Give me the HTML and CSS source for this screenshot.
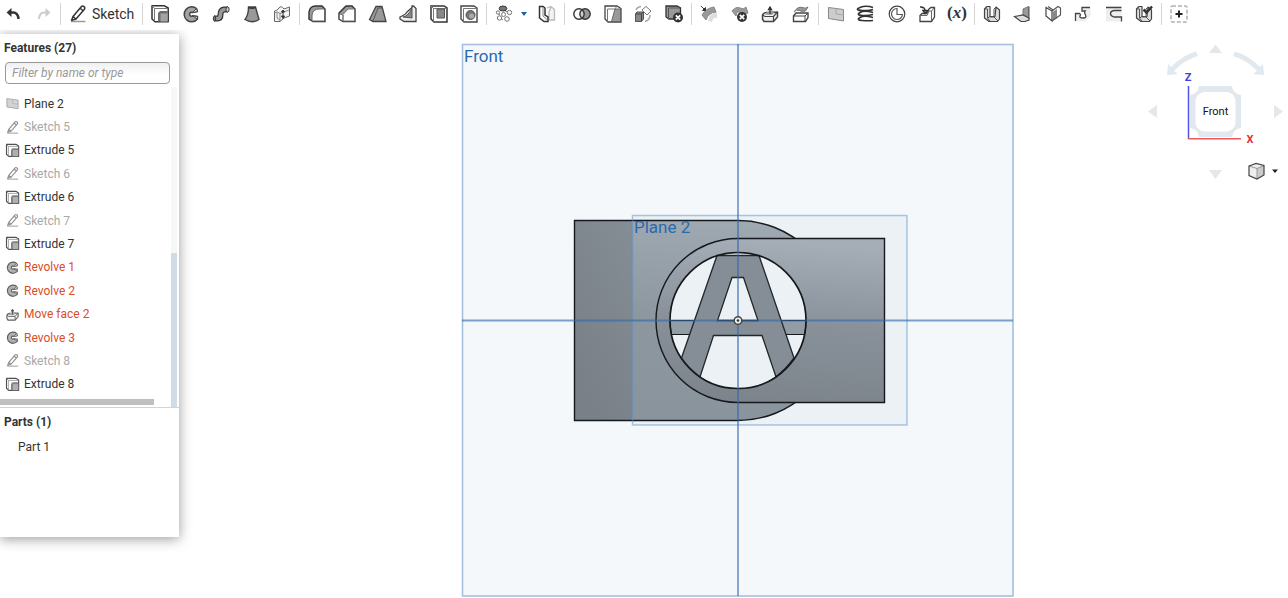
FILE: index.html
```html
<!DOCTYPE html>
<html lang="en">
<head>
<meta charset="utf-8">
<title>Part Studio</title>
<link rel="stylesheet" href="styles.css">
</head>
<body>
<svg class="symbols" aria-hidden="true">
  <symbol id="i-sketch" viewBox="0 0 20 20"><path d="M5 12.500 13.500 2.500Q14.500 1.500 16 2.700T16.200 5.500L8 15 3.500 16.500ZM5 12.500 8 15M12.200 4.200 15 6.700" fill="none" stroke="currentColor" stroke-width="1.500" stroke-linejoin="round"/><path d="M3 17.500H17.500" stroke="#999" stroke-width="1.500"/></symbol>
  <symbol id="i-extrude" viewBox="0 0 20 20"><path d="M2 1.800H14.500L18.200 4V17.800H5L2 15Z" fill="#fff" stroke="#333" stroke-width="1.500" stroke-linejoin="round"/><path d="M4.500 17V4.500H17.500M4.500 4.500 2 2" fill="none" stroke="#777"/><path d="M8 17.500V9L10 7H17.500V17.500Z" fill="#6d6d6d"/><rect x="10.500" y="9.500" width="7" height="8" fill="#a3a3a3"/></symbol>
  <symbol id="i-revolve" viewBox="0 0 20 20"><path d="M15.500 4.500A7.500 7.500 0 1 0 16.500 15L16.500 12.500 11.500 11.800A1.900 1.900 0 1 1 11.500 8.600L16.500 7.500Z" fill="#a3a3a3" stroke="#444" stroke-width="1.500" stroke-linejoin="round"/><path d="M11.500 11.800 16.500 12.500V15ZM11.500 8.600 16.500 7.500 15.500 4.500Z" fill="#eee" stroke="#444"/></symbol>
  <symbol id="i-plane" viewBox="0 0 20 20"><path d="M2.500 3.500 17.500 5.500V17L2.500 14.500Z" fill="#ccc" stroke="#888"/><path d="M10 4.500V10L17.500 11" fill="none" stroke="#aaa"/></symbol>
  <symbol id="i-move" viewBox="0 0 20 20"><path d="M2.500 11Q4 8 7 8.500T17.500 8V13L13.500 17.500H4L2.500 15Z" fill="#f2f2f2" stroke="#444" stroke-width="1.500" stroke-linejoin="round"/><path d="M2.500 11 5 12.500H13.500V17M13.500 12.500 17 8.500" fill="none" stroke="#444" stroke-width="1.200"/><path d="M5 10.500Q7 6 15 7L12 11Z" fill="#999"/><path d="M10 10V4M8.500 5.500 10 3 11.500 5.500Z" fill="#333" stroke="#333" stroke-width="1.300"/></symbol>
  <symbol id="i-sheet" viewBox="0 0 20 20"><path d="M2.500 5 5 2.500H8V12.500H13L14 3 17.500 6V15L15.500 17.500H7L2.500 14Z" fill="#ddd" stroke="#444" stroke-width="1.200" stroke-linejoin="round"/><path d="M2.500 5 5.500 5V14L8 12.500M5.500 14 8 17M12 5 14 3M12 5V13L16 17M12 13H8" fill="none" stroke="#555"/></symbol>
  <linearGradient id="front-face" x1="0.350" y1="0" x2="0.250" y2="1"><stop offset="0" stop-color="#a5adb7"/><stop offset=".5" stop-color="#88919a"/><stop offset="1" stop-color="#7c838b"/></linearGradient>
  <linearGradient id="back-face" x1="0.600" y1="0" x2="0.500" y2="1"><stop offset="0" stop-color="#9ea9b1"/><stop offset=".5" stop-color="#8c979f"/><stop offset="1" stop-color="#8a949d"/></linearGradient>
  <linearGradient id="side-face" x1="1" y1="0" x2="0.400" y2="1"><stop offset="0" stop-color="#858d95"/><stop offset="1" stop-color="#798087"/></linearGradient>
</svg>

<header class="toolbar">
  <div class="group">
    <button class="tool" aria-label="Undo"><svg viewBox="0 0 20 20"><path d="M6.500 4V13L1.500 8.500Z" fill="#333"/><path d="M5 8.500H8Q13 8.500 13.500 15" fill="none" stroke="#333" stroke-width="2.500"/></svg></button>
    <button class="tool" aria-label="Redo"><svg viewBox="0 0 20 20"><path d="M11.500 4V13L16.500 8.500Z" fill="#ccc"/><path d="M13 8.500H10Q5.500 8.500 5 15" fill="none" stroke="#ccc" stroke-width="2"/></svg></button>
  </div>
  <div class="group"><button class="tool sketch"><svg><use href="#i-sketch"/></svg>Sketch</button></div>
  <div class="group">
    <button class="tool" aria-label="Extrude"><svg><use href="#i-extrude"/></svg></button>
    <button class="tool" aria-label="Revolve"><svg><use href="#i-revolve"/></svg></button>
    <button class="tool" aria-label="Sweep"><svg viewBox="0 0 20 20"><path d="M3 14.500H6.500Q9.500 14.500 9.500 10.500 9.500 6 13 5.500H17" fill="none" stroke="#333" stroke-width="6"/><path d="M3.500 14.500H6.500Q9.500 14.500 9.500 10.500 9.500 6 13 5.500H16" fill="none" stroke="#999" stroke-width="3.500"/><ellipse cx="16.500" cy="5.500" rx="1.600" ry="2.600" fill="#ccc" stroke="#333"/><ellipse cx="3.500" cy="14.500" rx="1.200" ry="2.500" fill="#777" stroke="#333"/></svg></button>
    <button class="tool" aria-label="Loft"><svg viewBox="0 0 20 20"><path d="M6.500 3H13.500L17 15.500Q10 20 3 15.500Q6.500 11 6.500 3Z" fill="#999" stroke="#444" stroke-width="1.400"/><path d="M6.500 3.500Q10 5 13.500 3.500" fill="none" stroke="#333" stroke-width="1.500"/></svg></button>
    <button class="tool" aria-label="Thicken"><svg viewBox="0 0 20 20"><path d="M2.500 7Q5 7 7 4T12 5L17.500 3V12L12 14 8 17.500H2.500Z" fill="#f3f3f3" stroke="#666"/><path d="M2.500 9 5.500 8 8 9.500 17 6M8 9V17M5 8V14L8 16" fill="none" stroke="#888"/><path d="M11 8V12M9.500 8 11 6 12.500 8ZM9.500 12 11 14.500 12.500 12Z" fill="#333" stroke="#333"/></svg></button>
  </div>
  <div class="group">
    <button class="tool" aria-label="Fillet"><svg viewBox="0 0 20 20"><path d="M2 8Q3 2 8.500 2H15L18 5V17.500H6L2 15Z" fill="#999" stroke="#333" stroke-width="1.400"/><path d="M5 17V11Q6 5 12 5H17.500V17Z" fill="#fff" stroke="#666"/></svg></button>
    <button class="tool" aria-label="Chamfer"><svg viewBox="0 0 20 20"><path d="M2 9 9 2H15L18 5V17.500H6L2 15Z" fill="#999" stroke="#333" stroke-width="1.400"/><path d="M6 17V10.500L11 5H17.500V17ZM2.500 10 6 11V17L2.500 15Z" fill="#fff" stroke="#777"/></svg></button>
    <button class="tool" aria-label="Draft"><svg viewBox="0 0 20 20"><path d="M1.500 15.500 8 2.500H14L18 17.500H5Z" fill="#999" stroke="#444" stroke-width="1.300"/><path d="M5 17 10 4H14" fill="none" stroke="#555"/></svg></button>
    <button class="tool" aria-label="Rib"><svg viewBox="0 0 20 20"><path d="M2 13 5 11.500Q8 10 9 8L14 3.500V2H15.500L18 4.500V17.500H6L2 15Z" fill="#eee" stroke="#444" stroke-width="1.300"/><path d="M5 13Q10 12 14 4.500V14Z" fill="#888" stroke="#555"/></svg></button>
    <button class="tool" aria-label="Shell"><svg viewBox="0 0 20 20"><path d="M2 2H15L18 4V18H5L2 15Z" fill="#fff" stroke="#333" stroke-width="1.500"/><path d="M4.500 17.500V4.500H18M2 2 4.500 4.500" fill="none" stroke="#777"/><path d="M8 5H15.500V14H8Z" fill="#888" stroke="#555"/></svg></button>
    <button class="tool" aria-label="Hole"><svg viewBox="0 0 20 20"><path d="M2 2H15L18 4V18H5L2 15Z" fill="#fff" stroke="#444" stroke-width="1.400"/><path d="M4.500 17.500V4.500H18" fill="none" stroke="#777"/><circle cx="11.500" cy="11" r="4.500" fill="#777" stroke="#555"/><circle cx="12.500" cy="12" r="2.500" fill="#aaa"/></svg></button>
  </div>
  <div class="group">
    <button class="tool" aria-label="Linear pattern"><svg viewBox="0 0 20 20"><g fill="#fff" stroke="#777"><path d="M2 8 6 11M10 6 16 10M5 13 9 16"/><circle cx="4" cy="8.500" r="1.700"/><circle cx="9.500" cy="10.500" r="2"/><circle cx="15.500" cy="8.500" r="2.200"/><circle cx="5.500" cy="14" r="2.200"/><circle cx="13" cy="15" r="2.300"/></g><ellipse cx="9" cy="4.500" rx="3.800" ry="2.500" fill="#777" stroke="#333"/></svg></button>
    <button class="caret" aria-label="Pattern options"><svg viewBox="0 0 6 4"><path d="M0 0H6L3 4Z" fill="#1b5faa"/></svg></button>
    <button class="tool" aria-label="Mirror"><svg viewBox="0 0 20 20"><path d="M10 4 14 2.500 17.500 5.500V16H12V8L14 3" fill="#f3f3f3" stroke="#bbb" stroke-width="1.300"/><path d="M2.500 2.500H6L8 4V11L11 13V17.500H7L2.500 14Z" fill="#fff" stroke="#333" stroke-width="1.500"/><path d="M6 3V12L10.500 16" fill="none" stroke="#888"/></svg></button>
  </div>
  <div class="group">
    <button class="tool" aria-label="Boolean"><svg viewBox="0 0 20 20"><circle cx="13" cy="10" r="5.200" fill="#999"/><circle cx="7" cy="10" r="5.200" fill="#fff" fill-opacity=".5"/><g fill="none" stroke="#333" stroke-width="1.400"><circle cx="7" cy="10" r="5.200"/><circle cx="13" cy="10" r="5.200"/></g></svg></button>
    <button class="tool" aria-label="Split"><svg viewBox="0 0 20 20"><path d="M2 2H14L18 4.500V18H5L2 15Z" fill="#fff" stroke="#444" stroke-width="1.300"/><path d="M12 5H17.500V17.500H8.500Z" fill="#999" stroke="#666"/><path d="M4.500 17.500V5H12L14 2" fill="none" stroke="#777"/></svg></button>
    <button class="tool" aria-label="Transform"><svg viewBox="0 0 20 20"><path d="M2.500 9.500 4 8H10.500V15L8.500 17.500H2.500Z" fill="#888" stroke="#555"/><path d="M2.500 10H8.500V17.500M8.500 10 10.500 8" fill="none" stroke="#444"/><path d="M9 6 13 2.500 18 7 14 11Z" fill="#fff" stroke="#777"/><path d="M3 6Q4 3 8 2.500M12 17.500Q17 16 17 11" fill="none" stroke="#aaa" stroke-width="1.500"/></svg></button>
    <button class="tool" aria-label="Delete part"><svg viewBox="0 0 20 20"><path d="M2 2H13L16.500 4V15H5L2 13Z" fill="#999" stroke="#333" stroke-width="1.300"/><path d="M4.500 15V4H16" fill="none" stroke="#555"/><circle cx="14" cy="13.500" r="5" fill="#333"/><path d="M11.800 11.300 16.200 15.700M16.200 11.300 11.800 15.700" stroke="#fff" stroke-width="1.700"/></svg></button>
  </div>
  <div class="group">
    <button class="tool" aria-label="Modify fillet"><svg viewBox="0 0 20 20"><path d="M9 17Q10 9 18 8V14Q14 13 13 18Z" fill="#ddd"/><path d="M3 11Q7 4 15 3L17 8Q10 8 7 16Z" fill="#999" stroke="#888"/><path d="M2 2 5.500 5.500M6.500 3.500V6.500H3.500Z" fill="#333" stroke="#333"/></svg></button>
    <button class="tool" aria-label="Delete face"><svg viewBox="0 0 20 20"><path d="M2 7Q6 2 10 4T16 3L18 9Q13 12 10 9T6 12Z" fill="#999" stroke="#888"/><circle cx="12" cy="13" r="5" fill="#333"/><path d="M9.800 10.800 14.200 15.200M14.200 10.800 9.800 15.200" stroke="#fff" stroke-width="1.700"/></svg></button>
    <button class="tool" aria-label="Move face"><svg><use href="#i-move"/></svg></button>
    <button class="tool" aria-label="Replace face"><svg viewBox="0 0 20 20"><path d="M2.500 12 5 9H17V13.500L14.500 17.500H2.500Z" fill="#fff" stroke="#444" stroke-width="1.400"/><path d="M2.500 12H14V17.500M14 12 17 9" fill="none" stroke="#444"/><path d="M3 8Q7 2 11 3.500T17 3L14.500 7Q11 8 8 6.500T3 8Z" fill="#999" stroke="#777"/></svg></button>
  </div>
  <div class="group">
    <button class="tool" aria-label="Plane"><svg><use href="#i-plane"/></svg></button>
    <button class="tool" aria-label="Helix"><svg viewBox="0 0 20 20"><path d="M17 3.500Q10 1 4 3.500T6 6.500 17 5.500M17 8.500Q8 6 4 8.500T6 11.500 17 10.500M17 13.500Q8 11 4 13.500T6 16.500 17 16.500" fill="none" stroke="#333" stroke-width="1.700"/></svg></button>
    <button class="tool" aria-label="3D curve"><svg viewBox="0 0 20 20"><circle cx="10" cy="10" r="7.800" fill="#fff" stroke="#444" stroke-width="1.200"/><path d="M10 4.500V10.500H15.500A5.500 5.500 0 1 1 10 4.500Z" fill="none" stroke="#555" stroke-width="1.200"/></svg></button>
    <button class="tool" aria-label="Import"><svg viewBox="0 0 20 20"><path d="M3 11.500 5 9.500H10L12 5 14 3.500H17.500V13L14.500 17.500H3Z" fill="#fff" stroke="#444" stroke-width="1.300"/><path d="M3 11.500H10L12 7H14.500V17M14.500 7 17.500 3.500" fill="none" stroke="#666"/><path d="M3 3Q8 2.500 8 7M6 6.500H10.500L8 9.500Z" fill="#333" fill-opacity=".2" stroke="#333" stroke-width="1.500"/></svg></button>
    <button class="tool variable" aria-label="Variable">(<i>x</i>)</button>
  </div>
  <div class="group">
    <button class="tool" aria-label="Sheet metal model"><svg><use href="#i-sheet"/></svg></button>
    <button class="tool" aria-label="Flange"><svg viewBox="0 0 20 20"><path d="M11 5 16.500 2.500V14L11 11Z" fill="#999" stroke="#777"/><path d="M2.500 12.500 11 11 17 14V16L13 17.500H9Z" fill="#ddd" stroke="#444" stroke-width="1.200"/><path d="M17 2.500V15" stroke="#555"/></svg></button>
    <button class="tool" aria-label="Bend"><svg viewBox="0 0 20 20"><path d="M3 3.500 9 7V17L3 12Z" fill="#fff" stroke="#444" stroke-width="1.200"/><path d="M9 8.500 14 5V14L9 17Z" fill="#888"/><path d="M9 7 15 2.500 17.500 4V11L9 17M5 2.500 10 6" fill="none" stroke="#555" stroke-width="1.200"/></svg></button>
    <button class="tool" aria-label="Tab"><svg viewBox="0 0 20 20"><path d="M2 9H7V13H12V8H9V3H17.500V12L12 17.500H2Z" fill="#eee"/><path d="M2.500 17V9.500H6.500Q8 10 7 12T10 14 12.500 11 12 7H9V3.500H17" fill="none" stroke="#444" stroke-width="1.300"/></svg></button>
    <button class="tool" aria-label="Joint"><svg viewBox="0 0 20 20"><path d="M2 2.500H17.500V17.500H2Z" fill="#eee"/><path d="M2 3.500H17.500M17.500 6.500H10Q6.500 7 6.500 9.500T10 13H17.500V17.500" fill="none" stroke="#444" stroke-width="1.300"/></svg></button>
    <button class="tool" aria-label="Finish sheet metal model"><svg viewBox="0 0 20 20"><use href="#i-sheet"/><path d="M9.500 5.500 12.500 8.500 18 2.500" fill="none" stroke="#333" stroke-width="2.500"/></svg></button>
  </div>
  <div class="group last">
    <button class="tool" aria-label="Add custom features"><svg viewBox="0 0 20 20"><rect x="2" y="2" width="16" height="16" rx="1" fill="none" stroke="#888" stroke-dasharray="4 2"/><path d="M10 6.500V13.500M6.500 10H13.500" stroke="#222" stroke-width="2"/></svg></button>
  </div>
</header>

<main class="workspace">
  <aside class="panel">
    <h2>Features (27)</h2>
    <input class="filter" type="text" placeholder="Filter by name or type" aria-label="Filter by name or type">
    <div class="scroller">
      <ul class="features">
        <li><svg><use href="#i-plane"/></svg>Plane 2</li>
        <li class="muted"><svg><use href="#i-sketch"/></svg>Sketch 5</li>
        <li><svg><use href="#i-extrude"/></svg>Extrude 5</li>
        <li class="muted"><svg><use href="#i-sketch"/></svg>Sketch 6</li>
        <li><svg><use href="#i-extrude"/></svg>Extrude 6</li>
        <li class="muted"><svg><use href="#i-sketch"/></svg>Sketch 7</li>
        <li><svg><use href="#i-extrude"/></svg>Extrude 7</li>
        <li class="error"><svg><use href="#i-revolve"/></svg>Revolve 1</li>
        <li class="error"><svg><use href="#i-revolve"/></svg>Revolve 2</li>
        <li class="error"><svg><use href="#i-move"/></svg>Move face 2</li>
        <li class="error"><svg><use href="#i-revolve"/></svg>Revolve 3</li>
        <li class="muted"><svg><use href="#i-sketch"/></svg>Sketch 8</li>
        <li><svg><use href="#i-extrude"/></svg>Extrude 8</li>
      </ul>
      <div class="track"><div class="thumb"></div></div>
      <div class="hbar"></div>
    </div>
    <section class="parts">
      <h2>Parts (1)</h2>
      <p>Part 1</p>
    </section>
  </aside>

  <div class="canvas">
    <svg class="model" viewBox="461 43 554 555" role="img" aria-label="Front view of Part 1">
      <rect x="462.500" y="44.500" width="550.500" height="551.500" fill="#f4f8fb" stroke="#a5c0df" stroke-width="1.600"/>
      <rect x="632.500" y="215.500" width="274.500" height="209.500" fill="#ebf1f5"/>
      <path d="M574.500 220.500H738A100 100 0 0 1 738 420.500H574.500Z" fill="url(#back-face)"/>
      <rect x="574.500" y="220.500" width="58" height="200" fill="url(#side-face)"/>
      <path d="M574.500 220.500H738A100 100 0 0 1 738 420.500H574.500Z" fill="none" stroke="#15191d" stroke-width="1.400"/>
      <path d="M738 238.500H884.500V402.500H738A82 82 0 0 1 738 238.500Z" fill="url(#front-face)" stroke="#15191d" stroke-width="1.400"/>
      <circle cx="738" cy="320.500" r="68" fill="#ebf1f5"/>
      <path d="M670 320.500H806Q806 328 804.500 334.500H671.500Q670 328 670 320.500Z" fill="#929ca5" stroke="#15191d"/>
      <path d="M717 255.500H759L794 358Q786 369 776 377L762 335.500H713.500L700 377Q689 369 681.500 358ZM732 277.500 717.500 320.500H758L743.500 277.500Z" fill="#858e97" fill-rule="evenodd" stroke="#22272b" stroke-width="1.300"/>
      <circle cx="738" cy="320.500" r="68" fill="none" stroke="#15191d" stroke-width="1.700"/>
      <rect x="632.500" y="215.500" width="274.500" height="209.500" fill="none" stroke="#5e92cc" stroke-opacity=".5" stroke-width="1.500"/>
      <path d="M738 44V596M462 320.500H1013" stroke="#2e69ad" stroke-opacity=".62" stroke-width="1.800"/>
      <circle cx="738" cy="320.500" r="3.800" fill="#eee" stroke="#444" stroke-width="1.400"/><circle cx="738" cy="320.500" r="1.300" fill="#333"/>
      <text class="plane-label" x="464" y="62">Front</text>
      <text class="plane-label" x="634" y="233">Plane 2</text>
    </svg>
  </div>

  <div class="view-tools">
    <svg class="view-cube" viewBox="1140 34 148 150" role="img" aria-label="View cube">
      <g fill="#e1e8ee"><path d="M1215.500 44.500 1222 53H1209ZM1215.500 179 1222 170H1209ZM1148 111.500 1157 105V118ZM1283 111.500 1274 105V118Z"/><path d="M1199 86H1232Q1233 94 1241 95V128Q1233 129 1232 137H1199Q1198 129 1190 128V95Q1198 94 1199 86Z"/><path d="M1167 75 1168 64 1171 67Q1183 55 1196 51.500L1198 56Q1184 60 1174 71L1178 74ZM1264 75 1263 64 1260 67Q1248 55 1235 51.500L1233 56Q1247 60 1257 71L1253 74Z"/></g>
      <rect x="1195.500" y="92" width="40" height="39.500" rx="9" fill="#fff"/>
      <path d="M1188.500 86V139" stroke="#5252ed" stroke-width="1.500"/><path d="M1188 138.800H1241" stroke="#ed5a60" stroke-width="1.500"/>
      <text class="cube-label" x="1215.500" y="115">Front</text>
      <text class="axis z" x="1188" y="81">Z</text><text class="axis x" x="1250" y="143">X</text>
    </svg>
    <button class="view-menu" aria-label="View options"><svg viewBox="0 0 32 18"><path d="M2 4 9 1.500 17 3.500V13L10 17 2 13.500Z" fill="#eee"/><path d="M10 6.500V17L17 13V3.500Z" fill="#ccc"/><path d="M2 4 10 6.500 17 3.500M10 6.500V17" fill="none" stroke="#999"/><path d="M2 4 9 1.500 17 3.500V13L10 17 2 13.500Z" fill="none" stroke="#444" stroke-width="1.200"/><path d="M25 7.500H31L28 11Z" fill="#222"/></svg></button>
  </div>
</main>
</body>
</html>
```
FILE: styles.css
```css
* { box-sizing: border-box; }
body { margin: 0; height: 100vh; overflow: hidden; display: flex; flex-direction: column; background: #fff; color: #333; font: 12px/16px Roboto, "Liberation Sans", sans-serif; }
.symbols { position: absolute; width: 0; height: 0; }
button { border: 0; padding: 0; background: none; color: inherit; font: inherit; }
button svg { display: block; width: 100%; height: 100%; }

.toolbar { display: grid; grid-template-columns: 61px 82px 157px 187px 78px 127px 127px 156px 187px 1fr; padding: 3px 0 9px; }
.group { display: flex; align-items: center; justify-content: space-between; height: 22px; padding: 0 7px; border-right: 1px solid #d5d5d5; }
.group:first-child { padding-left: 5px; padding-right: 6px; }
.group.last { border: 0; }
.tool { width: 20px; height: 20px; flex: none; }
.caret { width: 6px; height: 4px; margin-right: 3px; }
.tool.sketch { display: flex; align-items: center; gap: 4px; width: auto; font-size: 14px; }
.tool.sketch svg { width: 20px; height: 20px; }
.variable { display: flex; justify-content: center; font: bold 17px/18px "Liberation Serif", serif; white-space: nowrap; }

.workspace { flex: 1; min-height: 0; display: flex; align-items: flex-start; }
.panel { width: 179px; flex: none; background: #fff; box-shadow: 0 2px 12px rgba(0, 0, 0, .4); clip-path: inset(-4px -16px -16px 0); }
h2 { margin: 0; padding: 6px 4px; font-size: 12px; line-height: 16px; font-weight: 700; }
.filter { display: block; width: 165px; height: 22px; margin: 0 5px 3px; padding: 0 6px; border: 1px solid #999; border-radius: 4px; background: linear-gradient(#f0f0f0, #fff 60%); font: italic 12px/16px Roboto, "Liberation Sans", sans-serif; }
.filter::placeholder { color: #999; opacity: 1; }
.scroller { display: grid; grid-template-columns: 1fr 6px; padding-right: 2px; border-bottom: 1px solid #c5d7e4; }
.features { list-style: none; margin: 0; padding: 5px 0 3px 5px; height: 312px; display: grid; grid-auto-rows: 1fr; }
.features li { display: flex; align-items: center; gap: 4px; }
.features svg { width: 15px; height: 15px; opacity: .85; }
.muted { color: #a8a8a8; }
.muted svg { color: #777; }
.error { color: #d94e27; }
.track { grid-column: 2; grid-row: 1 / 3; background: #f5f7f9; display: flex; align-items: flex-end; }
.thumb { width: 100%; height: 48%; background: #cfdce6; }
.hbar { width: 154px; height: 6px; margin-bottom: 2px; background: #c0c0c0; }
.parts { height: 129px; }
.parts p { margin: 0; padding: 3px 18px; }

.canvas { flex: 1; min-width: 0; display: flex; justify-content: flex-end; padding-right: 125px; }
.model { flex: none; width: 554px; height: 555px; margin-top: 9px; }
.plane-label { font-size: 17px; fill: #2c68b0; }
.view-tools { flex: none; width: 148px; display: grid; }
.view-tools > * { grid-area: 1 / 1; }
.view-cube { display: block; width: 148px; height: 150px; }
.cube-label { font-size: 11px; fill: #111; text-anchor: middle; }
.axis { font-size: 11px; font-weight: 700; text-anchor: middle; }
.axis.z { fill: #4040e8; }
.axis.x { fill: #e0343c; }
.view-menu { align-self: end; justify-self: end; width: 32px; height: 18px; margin: 0 9px 4px 0; }
```
